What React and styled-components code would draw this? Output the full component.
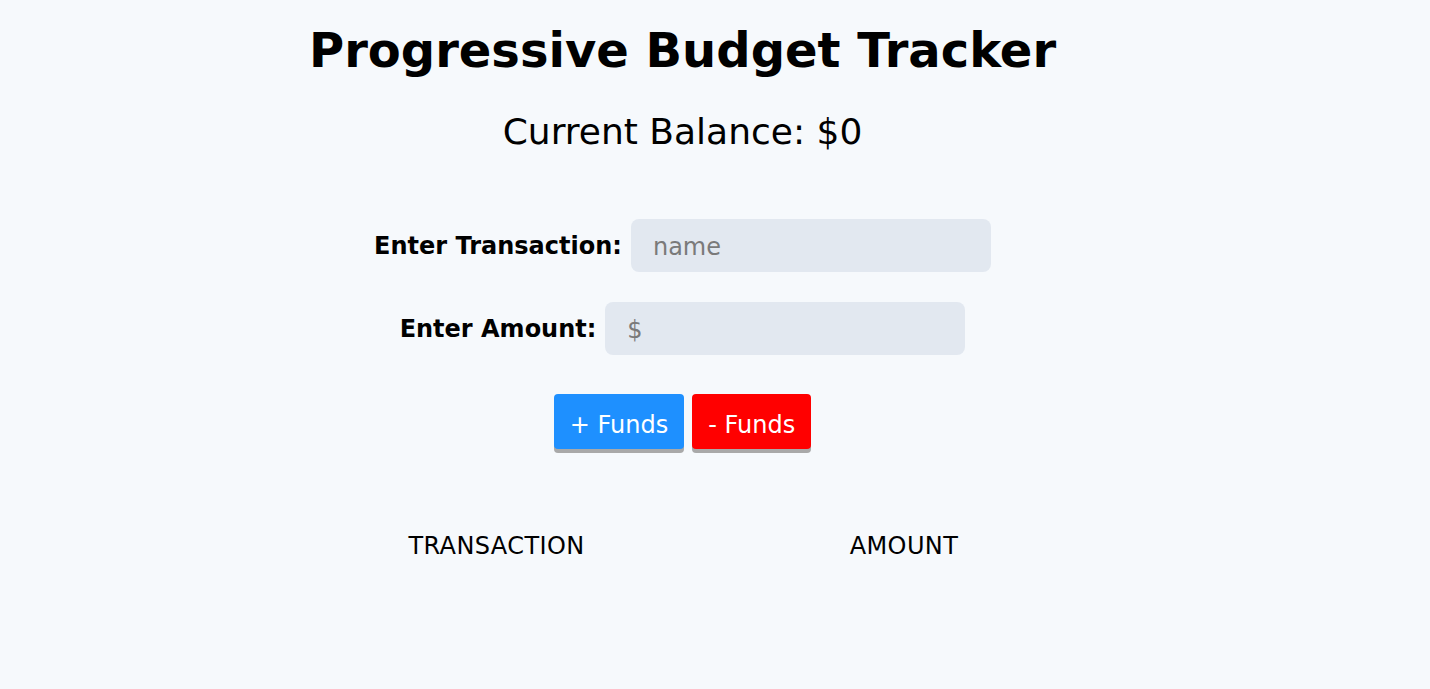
import React from 'react'
import styled, { createGlobalStyle } from 'styled-components'

const GlobalStyle = createGlobalStyle`
  html, body {
    margin: 0;
    padding: 0;
    background: #f6f9fc;
  }
  body {
    font-family: "DejaVu Sans", Verdana, sans-serif;
    font-size: 24px;
    color: #000;
  }
`

const Page = styled.main`
  width: 1365px;
  min-height: 689px;
  text-align: center;
`

const Title = styled.h1`
  margin: 0;
  padding-top: 22px;
  font-size: 48px;
  line-height: 56px;
  font-weight: bold;
`

const Balance = styled.h2`
  margin: 33px 0 0;
  font-size: 36px;
  line-height: 42px;
  font-weight: normal;
`

const Form = styled.form`
  margin-top: 66px;
  display: flex;
  flex-direction: column;
  align-items: center;
  gap: 30px;
`

const Row = styled.div`
  display: flex;
  align-items: center;
  gap: 9px;
`

const Label = styled.label`
  font-weight: bold;
  font-size: 24px;
`

const Input = styled.input`
  width: 360px;
  height: 53px;
  box-sizing: border-box;
  border: none;
  outline: none;
  border-radius: 8px;
  background: #e2e8f0;
  padding: 2px 22px 0;
  font-family: inherit;
  font-size: 24px;
  color: #000;

  &::placeholder {
    color: #7a7a7a;
  }
`

const Buttons = styled.div`
  margin-top: 9px;
  display: flex;
  gap: 8px;
`

const FundButton = styled.button`
  height: 55px;
  padding: 6px 16px 0;
  border: none;
  border-radius: 4px;
  background: ${({ $variant }) => ($variant === 'add' ? '#1e90ff' : '#ff0000')};
  color: #fff;
  font-family: inherit;
  font-size: 24px;
  box-shadow: 0 4px 0 #a9a9a9;
  cursor: pointer;
`

const Table = styled.div`
  width: 815px;
  margin: 83px auto 0;
  display: grid;
  grid-template-columns: 443px 372px;
`

const HeadCell = styled.div`
  font-size: 24px;
  line-height: 28px;
  letter-spacing: 0.4px;
  text-transform: uppercase;
`

const App = () => {
  return (
    <Page>
      <GlobalStyle />
      <Title>Progressive Budget Tracker</Title>
      <Balance>Current Balance: $0</Balance>
      <Form onSubmit={(e) => e.preventDefault()}>
        <Row>
          <Label htmlFor="t-name">Enter Transaction:</Label>
          <Input id="t-name" type="text" placeholder="name" />
        </Row>
        <Row>
          <Label htmlFor="t-amount">Enter Amount:</Label>
          <Input id="t-amount" type="number" placeholder="$" />
        </Row>
        <Buttons>
          <FundButton type="button" $variant="add">+ Funds</FundButton>
          <FundButton type="button" $variant="sub">- Funds</FundButton>
        </Buttons>
      </Form>
      <Table>
        <HeadCell>Transaction</HeadCell>
        <HeadCell>Amount</HeadCell>
      </Table>
    </Page>
  )
}

export default App
